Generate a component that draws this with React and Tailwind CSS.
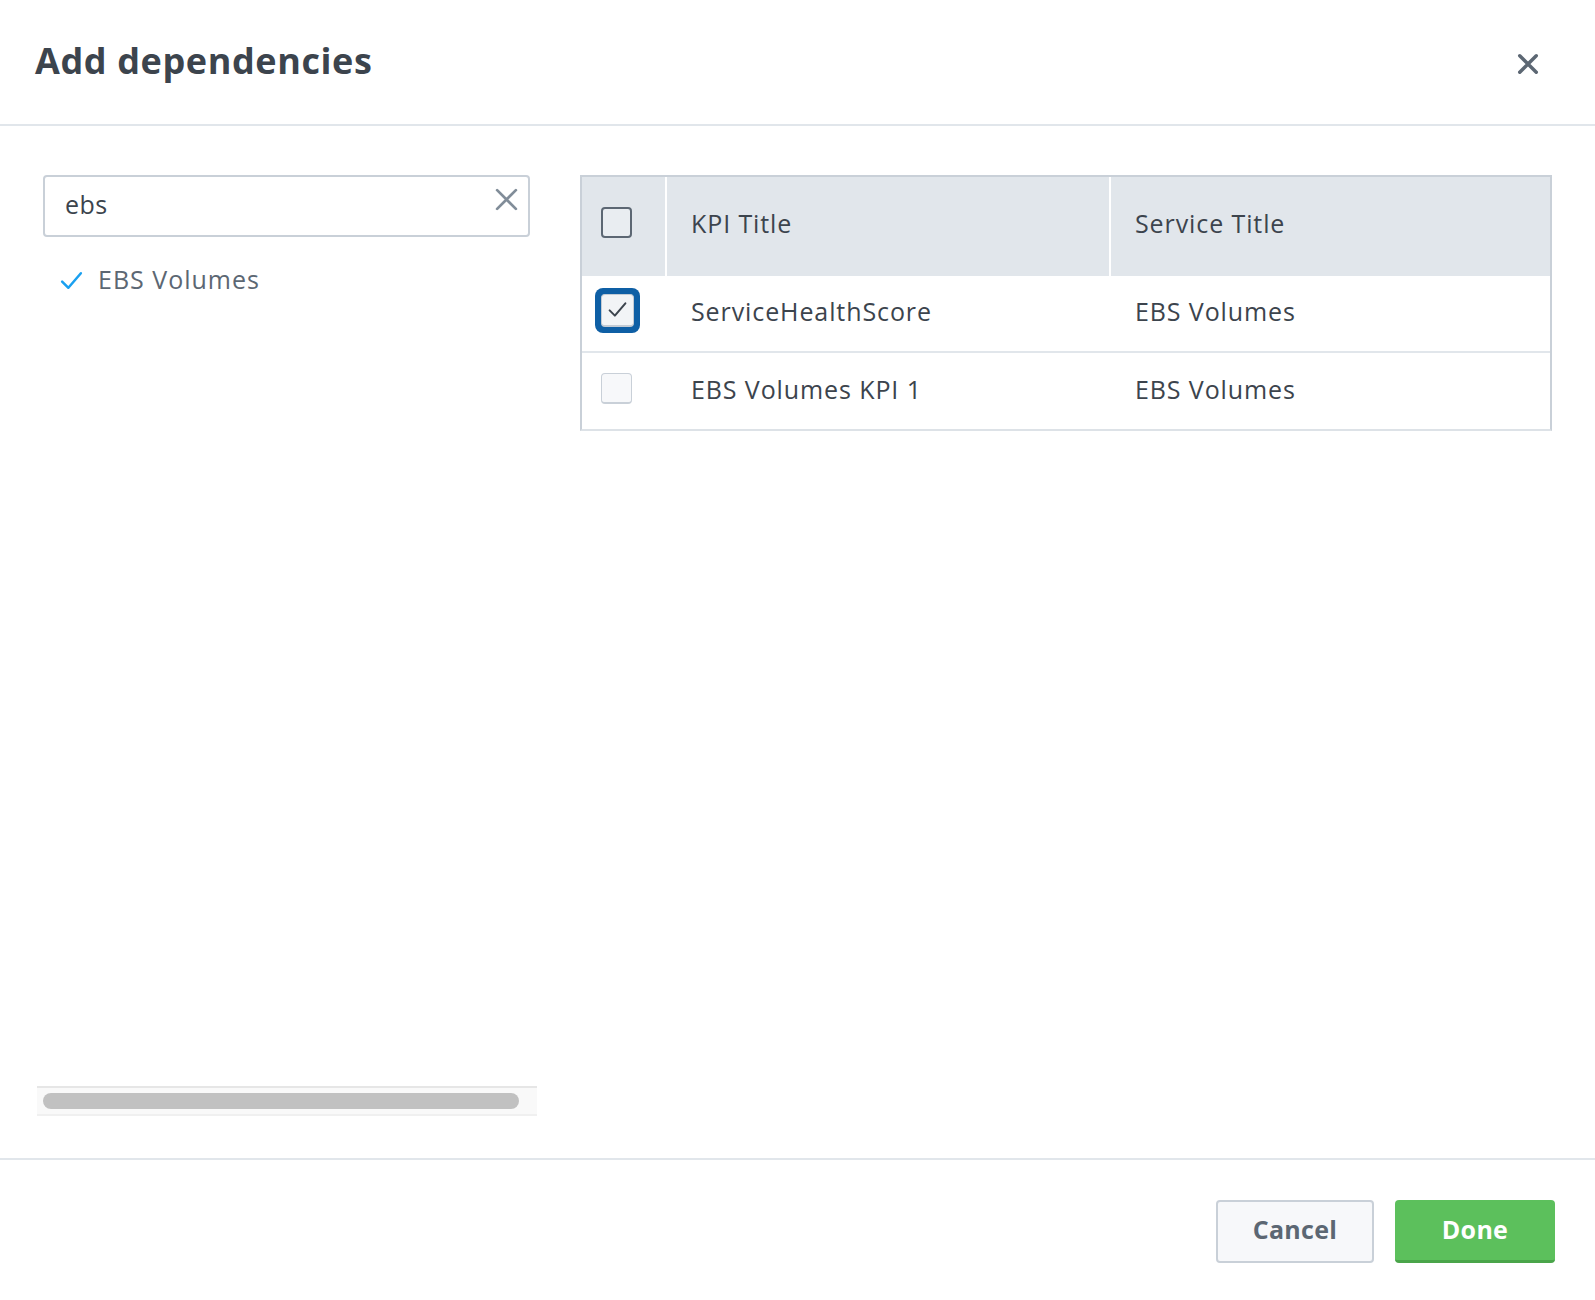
import React from "react";

function XIcon({ className, strokeWidth = 3 }) {
  return (
    <svg viewBox="0 0 24 24" className={className} fill="none" stroke="currentColor" strokeWidth={strokeWidth} strokeLinecap="round">
      <path d="M3 3 L21 21 M21 3 L3 21" />
    </svg>
  );
}

function Check({ className, strokeWidth = 2 }) {
  return (
    <svg viewBox="0 0 24 24" className={className} fill="none" stroke="currentColor" strokeWidth={strokeWidth} strokeLinecap="round" strokeLinejoin="round">
      <path d="M3 13 L9 19 L21 5" />
    </svg>
  );
}

export default function App() {
  return (
    <div className="w-[1595px] h-[1300px] bg-white flex flex-col font-['Open_Sans',sans-serif] text-[#3c444d]">
      {/* Header */}
      <div className="h-[126px] shrink-0 border-b-2 border-[#e1e6eb] flex items-center justify-between pl-[35px] pr-[56px]">
        <h1 className="text-[36px] font-bold leading-none tracking-[0.6px] pb-[3px]">Add dependencies</h1>
        <button className="text-[#5c6773] w-[22px] h-[22px] flex items-center justify-center mt-[3px]">
          <XIcon className="w-[22px] h-[22px]" strokeWidth={3.8} />
        </button>
      </div>

      {/* Body */}
      <div className="flex-1 flex pl-[37px] pr-[43px] pt-[49px] pb-[42px] min-h-0">
        {/* Left */}
        <div className="w-[500px] shrink-0 flex flex-col">
          <div className="ml-[6px] w-[487px] h-[62px] relative border-2 border-[#c9d0d8] rounded-[4px] flex items-center pl-[20px]">
            <span className="text-[25px] leading-none text-[#3c444d] pb-[4px] tracking-[0.5px]">ebs</span>
            <span className="absolute right-[9px] top-[10px] text-[#818d99]">
              <XIcon className="w-[25px] h-[25px]" strokeWidth={2.6} />
            </span>
          </div>
          <div className="flex items-center mt-[30px] pl-[22px] h-[26px]">
            <Check className="w-[25px] h-[25px] text-[#1aa0f0]" strokeWidth={2.4} />
            <span className="ml-[14px] text-[25px] leading-none text-[#5c6773] tracking-[1px] pb-[2px]">EBS Volumes</span>
          </div>
          <div className="flex-1" />
          <div className="h-[30px] border-t-2 border-b-2 border-t-[#e6e6e6] border-b-[#f0f0f0] bg-[#f9f9f9] flex items-center pl-[6px]">
            <div className="w-[476px] h-[16px] rounded-full bg-[#c1c1c1]" />
          </div>
        </div>

        {/* Right table */}
        <div className="ml-[43px] flex-1 self-start border-2 border-[#c9d0d8] border-b-[#dde2e7] text-[25px] tracking-[0.9px]">
          <div className="flex h-[99px] bg-[#e1e6eb]">
            <div className="w-[85px] shrink-0 flex items-center pl-[19px] pb-[9px] border-r-2 border-white">
              <div className="w-[31px] h-[31px] rounded-[4px] border-2 border-[#5c6773] bg-[#e9edf1]" />
            </div>
            <div className="w-[444px] shrink-0 flex items-center pl-[24px] pb-[5px] border-r-2 border-white">KPI Title</div>
            <div className="flex-1 flex items-center pl-[24px] pb-[5px]">Service Title</div>
          </div>
          <div className="flex h-[77px] border-b-2 border-[#e1e6eb]">
            <div className="w-[85px] shrink-0 flex items-center pl-[13px] pb-[7px]">
              <div className="w-[45px] h-[45px] rounded-[8px] bg-[#0e5fa5] flex items-center justify-center">
                <div className="w-[33px] h-[33px] rounded-[4px] bg-[#f2f4f6] border border-[#c3cbd4] border-b-2 flex items-center justify-center">
                  <Check className="w-[21px] h-[21px] text-[#3c444d]" strokeWidth={2.3} />
                </div>
              </div>
            </div>
            <div className="w-[444px] shrink-0 flex items-center pl-[24px] pb-[3px]">ServiceHealthScore</div>
            <div className="flex-1 flex items-center pl-[24px] pb-[3px]">EBS Volumes</div>
          </div>
          <div className="flex h-[76px]">
            <div className="w-[85px] shrink-0 flex items-center pl-[19px] pb-[6px]">
              <div className="w-[31px] h-[31px] rounded-[4px] bg-[#f7f8fa] border border-[#c9d0d8] border-b-2" />
            </div>
            <div className="w-[444px] shrink-0 flex items-center pl-[24px] pb-[3px]">EBS Volumes KPI 1</div>
            <div className="flex-1 flex items-center pl-[24px] pb-[3px]">EBS Volumes</div>
          </div>
        </div>
      </div>

      {/* Footer */}
      <div className="h-[142px] shrink-0 border-t-2 border-[#e1e6eb] flex items-center justify-end gap-[21px] pr-[40px] pt-[2px]">
        <button className="w-[158px] h-[63px] rounded-[4px] bg-[#f7f8fa] border-2 border-[#c9d0d8] text-[#5c6773] text-[25px] font-bold tracking-[0.3px] pb-[2px]">Cancel</button>
        <button className="w-[160px] h-[63px] rounded-[4px] bg-[#5cc05c] border-b-[3px] border-[#4aa54a] text-white text-[25px] font-bold tracking-[0.3px]">Done</button>
      </div>
    </div>
  );
}
